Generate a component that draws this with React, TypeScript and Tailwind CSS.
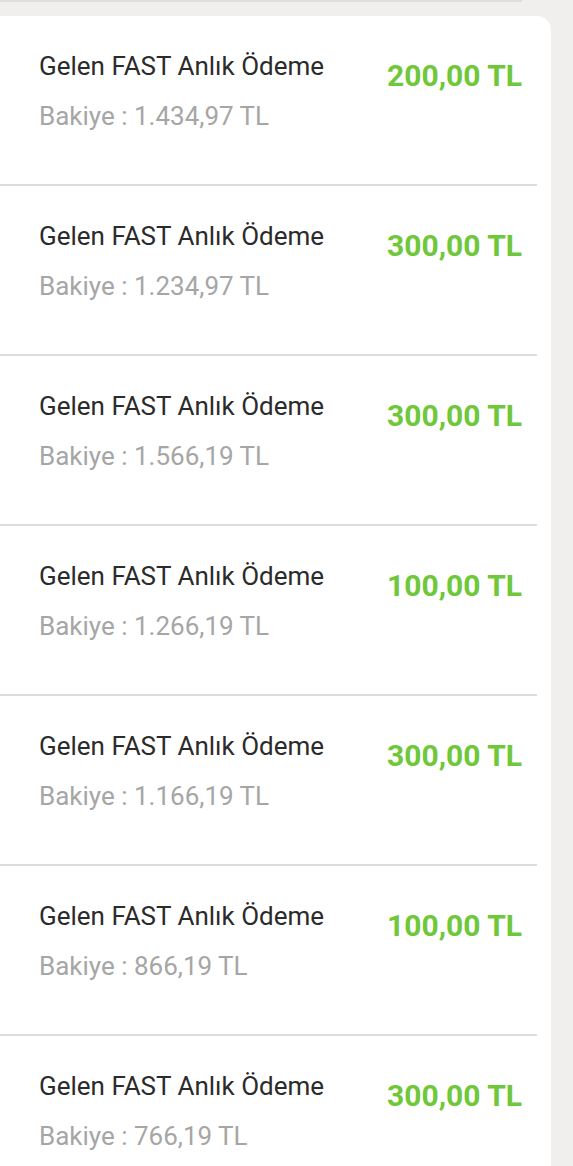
import React from "react";

const rows = [
  { amount: "200,00 TL", balance: "1.434,97 TL" },
  { amount: "300,00 TL", balance: "1.234,97 TL" },
  { amount: "300,00 TL", balance: "1.566,19 TL" },
  { amount: "100,00 TL", balance: "1.266,19 TL" },
  { amount: "300,00 TL", balance: "1.166,19 TL" },
  { amount: "100,00 TL", balance: "866,19 TL" },
  { amount: "300,00 TL", balance: "766,19 TL" },
];

export default function App() {
  return (
    <div
      className="w-[573px] h-[1166px] overflow-hidden bg-[#f0efee] flex flex-col"
      style={{ fontFamily: "Roboto, 'Noto Sans', sans-serif" }}
    >
      <div className="h-[2px] w-[522px] bg-[#dedede] shrink-0" />
      <div className="mt-[14px] w-[551px] bg-white rounded-tr-[14px] flex flex-col shrink-0">
        {rows.map((r, i) => (
          <div key={i} className="flex flex-col">
            {i > 0 && <div className="h-[2px] mr-[14px] bg-[#dcdcdc]" />}
            <div className="h-[168px] flex justify-between pl-[39px] pr-[29px]">
              <div className="flex flex-col pt-[35px]">
                <div className="text-[26px] leading-[30px] text-[#2b2b2b]">
                  Gelen FAST Anlık Ödeme
                </div>
                <div className="mt-[20px] text-[26px] leading-[30px] text-[#a6a6a6]">
                  Bakiye : {r.balance}
                </div>
              </div>
              <div className="pt-[44px] text-[30px] leading-[32px] font-bold text-[#6fc73a]">
                {r.amount}
              </div>
            </div>
          </div>
        ))}
      </div>
      <div className="flex-1 bg-[#f7f7f7]" />
    </div>
  );
}
